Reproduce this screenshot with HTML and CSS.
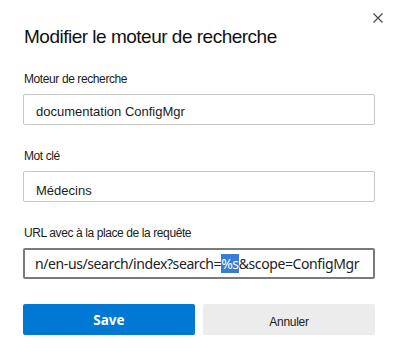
FILE: index.html
```html
<!DOCTYPE html>
<html lang="fr">
<head>
  <meta charset="UTF-8">
  <meta name="viewport" content="width=device-width, initial-scale=1.0">
  <title>Modifier le moteur de recherche</title>
  <link rel="stylesheet" href="styles.css">
</head>
<body>

  <div class="dialog">
    <button class="close-btn" aria-label="Fermer">
      <svg width="10" height="10" viewBox="0 0 10 10">
        <path d="M0.5 0.5 L9.5 9.5 M9.5 0.5 L0.5 9.5" stroke="#474747" stroke-width="1.1" fill="none"/>
      </svg>
    </button>

    <h2 class="dialog-title">Modifier le moteur de recherche</h2>

    <div class="form-row">
      <label class="field-label">Moteur de recherche</label>
      <div class="field">documentation ConfigMgr</div>
    </div>

    <div class="form-row">
      <label class="field-label">Mot clé</label>
      <div class="field field-low">Médecins</div>
    </div>

    <div class="form-row">
      <label class="field-label">URL avec à la place de la requête</label>
      <div class="field field-focus">n/en-us/search/index?search=<span class="selected">%s</span>&amp;scope=ConfigMgr</div>
    </div>

    <div class="button-row">
      <button class="btn btn-primary">Save</button>
      <button class="btn btn-secondary">Annuler</button>
    </div>
  </div>

</body>
</html>
```

FILE: styles.css
```css
body {
  margin: 0;
  background: #ffffff;
  font-family: 'Liberation Sans', Arial, sans-serif;
  color: #1b1b1b;
}

.dialog {
  position: relative;
  padding: 25px 23px 0 23px;
}

.close-btn {
  position: absolute;
  top: 13px;
  right: 15px;
  width: 10px;
  height: 10px;
  padding: 0;
  border: none;
  background: none;
  display: flex;
}

.dialog-title {
  margin: 0 0 22px 1px;
  font-size: 19px;
  line-height: 24px;
  font-weight: normal;
  letter-spacing: -0.5px;
  color: #111111;
}

.form-row {
  display: flex;
  flex-direction: column;
  gap: 7px;
  margin-bottom: 23px;
}

.field-label {
  font-size: 12px;
  line-height: 16px;
  letter-spacing: -0.4px;
  margin-left: 1px;
  color: #1b1b1b;
}

.field {
  height: 31px;
  box-sizing: border-box;
  border: 1px solid #c6c6c6;
  border-radius: 2px;
  padding: 4px 12px 0 12px;
  font-size: 13px;
  line-height: 25px;
  white-space: nowrap;
  overflow: hidden;
  color: #1b1b1b;
}

.field-low {
  padding-top: 6px;
}

.field-focus {
  height: 31px;
  border: 2px solid #7a7a7a;
  padding: 1px 0 0 10px;
  font-family: 'Noto Sans', 'Open Sans', sans-serif;
  font-size: 14px;
  letter-spacing: -0.4px;
  line-height: 25px;
  color: #222222;
}

.selected {
  background: #3a7bd5;
  color: #ffffff;
}

.button-row {
  display: flex;
  gap: 8px;
  margin-top: 25px;
}

.btn {
  flex: 1;
  height: 31px;
  border: none;
  border-radius: 2px;
  padding: 0;
  cursor: pointer;
}

.btn-primary {
  background: #0078d4;
  color: #ffffff;
  font-family: 'Noto Sans', 'Open Sans', sans-serif;
  font-weight: bold;
  font-size: 13.5px;
}

.btn-secondary {
  background: #ececec;
  color: #1b1b1b;
  font-family: 'Liberation Sans', Arial, sans-serif;
  font-size: 12px;
  letter-spacing: -0.3px;
  padding-top: 5px;
}
```
